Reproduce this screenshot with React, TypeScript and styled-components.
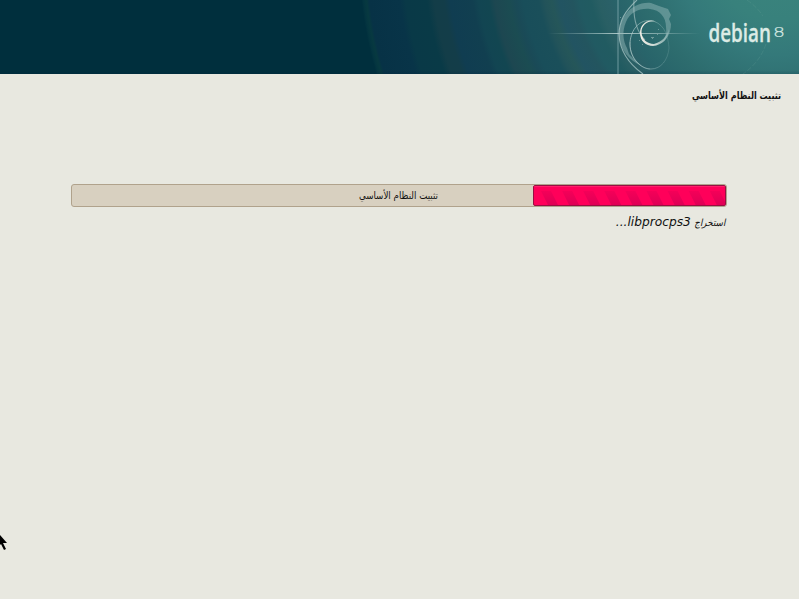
import React from "react";
import styled, { createGlobalStyle } from "styled-components";

const GlobalStyle = createGlobalStyle`
  * { box-sizing: border-box; }
  html, body { margin: 0; height: 100%; overflow: hidden; background: #e8e8e0; }
`;

const Screen = styled.div`
  position: relative;
  width: 799px;
  height: 599px;
  overflow: hidden;
  background: #e8e8e0;
  color: #111;
  font-family: "DejaVu Sans", sans-serif;
`;

const Banner = styled.header`
  height: 74px;
  display: flex;
  justify-content: flex-end;
  background:
    linear-gradient(to bottom, transparent 70px, rgba(0, 30, 60, 0.18) 74px),
    radial-gradient(
      circle at 777px -45px,
      #3b857d 0, #38817c 65px, #34797a 100px, #2d6c6e 140px, #28646a 165px,
      #2a6067 175px, #295f64 184px, #215b61 192px, #215a62 203px,
      #23555f 210px, #225462 222px, #255659 230px, #22535a 237px,
      #1a4f5a 243px, #194e5a 258px, #1a4a57 265px, #1b4c52 272px, #1d4751 286px,
      #124651 292px, #124552 302px, #113f50 308px, #103d51 330px,
      #133d49 336px, #133d48 346px, #093a47 353px, #093947 374px,
      #083448 380px, #073246 410px, #073940 413px, #043540 416px, #002f3d 418px
    );
`;

const Artwork = styled.svg`
  display: block;
  width: 259px;
  height: 74px;
`;

const Heading = styled.h1`
  margin: 0;
  height: 44px;
  padding: 13px 18px 0;
  font-size: 10px;
  line-height: 18px;
  font-weight: 700;
`;

const Condensed = styled.span<{ $ratio: number; $anchor: "right" | "center" }>`
  display: inline-block;
  transform: scaleX(${(p) => p.$ratio});
  transform-origin: ${(p) => p.$anchor};
`;

const Progress = styled.section`
  margin: 66px 72px 0 71px;
`;

const Track = styled.div`
  display: grid;
  height: 23px;
  border: 1px solid #b0a28c;
  border-radius: 3px;
  background: #d8d0c0;
`;

const Fill = styled.div`
  grid-area: 1 / 1;
  width: 193px;
  height: 21px;
  border: 1px solid #990e43;
  border-radius: 2px;
  overflow: hidden;
  background: #ff005a;
`;

const Stripes = styled.svg`
  display: block;
  width: 191px;
  height: 19px;
`;

const TrackLabel = styled.span`
  grid-area: 1 / 1;
  padding-left: 0;
  padding-right: 1px;
  text-align: center;
  font-size: 10px;
  line-height: 22px;
`;

const Status = styled.p`
  margin: 5px 2px 0 0;
  display: flex;
  align-items: baseline;
  height: 20px;
  line-height: 20px;
  font-style: italic;
`;

const Action = styled.span`
  width: 34px;
  font-size: 10px;
  white-space: nowrap;
`;

const PackageName = styled.span`
  font-size: 13px;
`;

const Cursor = styled.svg`
  position: absolute;
  left: 0;
  top: 533px;
  width: 8px;
  height: 18px;
`;

function Brand() {
  return (
    <Artwork viewBox="540 0 259 74">
      <defs>
        <linearGradient id="beam">
          <stop offset="0" stopColor="#a9cac9" stopOpacity="0" />
          <stop offset=".45" stopColor="#c5dcda" stopOpacity=".8" />
          <stop offset=".7" stopColor="#c5dcda" stopOpacity=".55" />
          <stop offset="1" stopColor="#a9cac9" stopOpacity="0" />
        </linearGradient>
        <linearGradient id="loop">
          <stop offset="0" stopColor="#b4cecd" stopOpacity=".7" />
          <stop offset=".5" stopColor="#a4c6c5" stopOpacity=".5" />
          <stop offset="1" stopColor="#94bcbc" stopOpacity=".2" />
        </linearGradient>
        <linearGradient id="ring">
          <stop offset="0" stopColor="#f3efe6" />
          <stop offset=".55" stopColor="#dce5df" stopOpacity=".9" />
          <stop offset="1" stopColor="#8fb6b5" stopOpacity=".6" />
        </linearGradient>
      </defs>
      <rect x="617" width="2" height="74" fill="#82aaae" opacity=".4" />
      <rect x="548" y="33" width="152" height="1" fill="url(#beam)" />
      <path
        d="M626 14C632 6 641 2 651 3L659 6L668 9L671 15L669 19L671 24C671 33 667 40 660 44C665 39 667 34 666 27C666 17 660 10 650 9C640 8 630 12 626 22C622 31 623 41 627 48L629 54L635 60L642 66C629 61 620 49 619 36C619 27 621 20 626 14Z"
        fill="#8fb6b5" opacity=".5"
      />
      <path d="M637 0C625 11 619 21 619 35C620 51 629 64 643 74" fill="none" stroke="#a9c7c7" strokeWidth="1.1" opacity=".75" />
      <path d="M634 0C633 16 636 31 645 40" fill="none" stroke="#b2cccc" strokeWidth="1.1" opacity=".6" />
      <path d="M650 20.5C637 20 630 33 630 44C630 59 641 69 651 69C661 69 668 60 669 48C668 32 662 22 650 20.5Z" fill="none" stroke="url(#loop)" strokeWidth="1" />
      <path d="M630 42C629 57 641 69 650 69" fill="none" stroke="#b4cecd" strokeWidth=".8" opacity=".4" />
      <path
        d="M656 21.5C647 18 640 25 640 33C640 41 646 46 653 46C662 45 669 39 669 29C667 36 662 42 654 44C647 44 641.5 39 641.5 32C641.5 25 648 20 656 21.5Z"
        fill="url(#ring)"
      />
      <g fill="#91b4b2" opacity=".65">
        <rect x="651" y="37" width="3" height="1" />
        <rect x="652" y="38" width="1" height="1" />
        <rect x="658" y="29" width="1" height="1" />
        <rect x="657" y="34" width="1" height="1" />
        <rect x="620" y="17" width="1" height="1" />
        <rect x="639" y="40" width="1" height="1" />
        <rect x="642" y="44" width="1" height="1" />
      </g>
      <path d="M747 0Q757 7 763 16M766 44Q760 62 743 74" fill="none" stroke="#72a6a1" strokeWidth=".7" strokeDasharray="5 2" opacity=".3" />
      <text x="708.5" y="42" fontFamily="Open Sans" fontWeight="600" fontSize="25.5" textLength="62.5" lengthAdjust="spacingAndGlyphs" fill="#dcebe5" stroke="#dcebe5" strokeWidth=".3">debian</text>
      <text x="773" y="37" fontFamily="DejaVu Sans" fontWeight="200" fontSize="14.5" textLength="12" lengthAdjust="spacingAndGlyphs" fill="#d8eae5" stroke="#d8eae5" strokeWidth=".2">8</text>
    </Artwork>
  );
}

const stripeStarts = Array.from({ length: 9 }, (_, i) => 7 + i * 21.1);

export default function App() {
  return (
    <>
      <GlobalStyle />
      <Screen>
        <Banner><Brand /></Banner>
        <main dir="rtl">
          <Heading>
            <Condensed $ratio={0.81} $anchor="right">تثبيت النظام الأساسي</Condensed>
          </Heading>
          <Progress>
            <Track>
              <Fill>
                <Stripes>
                  <defs>
                    <linearGradient id="stripe" x2="0" y2="1">
                      <stop stopColor="#b80050" stopOpacity=".15" />
                      <stop offset="1" stopColor="#b80050" stopOpacity=".45" />
                    </linearGradient>
                  </defs>
                  {stripeStarts.map((x) => (
                    <path key={x} d={`M${x} 5h10l7 14h-10z`} fill="url(#stripe)" />
                  ))}
                  <path d="M0 .5H191" stroke="#ff3d7c" opacity=".5" />
                </Stripes>
              </Fill>
              <TrackLabel>
                <Condensed $ratio={0.87} $anchor="center">تثبيت النظام الأساسي</Condensed>
              </TrackLabel>
            </Track>
            <Status>
              <Action>
                <Condensed $ratio={0.88} $anchor="right">استخراج</Condensed>
              </Action>
              <PackageName>
                <Condensed $ratio={0.94} $anchor="right">libprocps3...</Condensed>
              </PackageName>
            </Status>
          </Progress>
        </main>
        <Cursor>
          <path d="M0 2L7 10H3L6 16L4 17L1 11L0 12Z" fill="#000" />
        </Cursor>
      </Screen>
    </>
  );
}
